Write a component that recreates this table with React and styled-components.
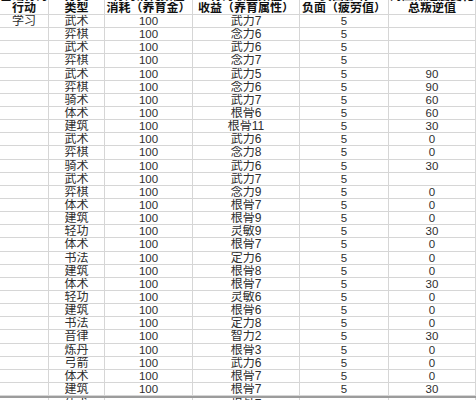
import React from 'react';
import styled, { createGlobalStyle } from 'styled-components';

const GlobalStyle = createGlobalStyle`
  html, body {
    margin: 0;
    padding: 0;
    background: #ffffff;
  }
  body {
    font-family: "Liberation Sans", "Noto Sans CJK SC", sans-serif;
    color: #2a2a2a;
  }
`;

const COLS = '49px 56px 88px 107px 89px 87px';

const Sheet = styled.div`
  width: 476px;
  height: 400px;
  overflow: hidden;
  background: #fff;
`;

const Row = styled.div`
  display: grid;
  grid-template-columns: ${COLS};
  height: ${({ $h }) => $h || '13.15px'};
  overflow: hidden;
  box-sizing: border-box;
  ${({ $cut }) => $cut && 'border-top: 2px solid #9c9c9c;'}
`;

const Cell = styled.div`
  box-sizing: border-box;
  border-right: 1px solid #d6d6d6;
  border-bottom: 1px solid #d6d6d6;
  display: flex;
  align-items: ${({ $valign }) => $valign || 'center'};
  justify-content: center;
  font-size: 12px;
  line-height: 12px;
  white-space: nowrap;
  overflow: hidden;
  font-weight: ${({ $bold }) => ($bold ? 700 : 400)};
  color: ${({ $bold }) => ($bold ? '#111' : '#2e2e2e')};
`;

const TopCell = styled(Cell)`
  border-bottom: none;
  position: relative;
  & > span {
    position: absolute;
    left: 0;
    right: 0;
    bottom: 0;
    text-align: center;
    transform: translateY(0);
  }
`;

const Num = styled.span`
  font-size: 11.5px;
`;

const head = ['行动', '类型', '消耗（养育金）', '收益（养育属性）', '负面（疲劳值）', '总叛逆值'];
const topRow = ['基础行为', '分类', '行为消耗数值', '行为收益数值', '负面影响', '对应叛逆度变化'];

const rows = [
  ['学习', '武术', '武力7', ''],
  ['', '弈棋', '念力6', ''],
  ['', '武术', '武力6', ''],
  ['', '弈棋', '念力7', ''],
  ['', '武术', '武力5', '90'],
  ['', '弈棋', '念力6', '90'],
  ['', '骑术', '武力7', '60'],
  ['', '体术', '根骨6', '60'],
  ['', '建筑', '根骨11', '30'],
  ['', '武术', '武力6', '0'],
  ['', '弈棋', '念力8', '0'],
  ['', '骑术', '武力6', '30'],
  ['', '武术', '武力7', ''],
  ['', '弈棋', '念力9', '0'],
  ['', '体术', '根骨7', '0'],
  ['', '建筑', '根骨9', '0'],
  ['', '轻功', '灵敏9', '30'],
  ['', '体术', '根骨7', '0'],
  ['', '书法', '定力6', '0'],
  ['', '建筑', '根骨8', '0'],
  ['', '体术', '根骨7', '30'],
  ['', '轻功', '灵敏6', '0'],
  ['', '建筑', '根骨6', '0'],
  ['', '书法', '定力8', '0'],
  ['', '音律', '智力2', '30'],
  ['', '炼丹', '根骨3', '0'],
  ['', '弓箭', '武力6', '0'],
  ['', '体术', '根骨7', '0'],
  ['', '建筑', '根骨7', '30'],
];

const DataRow = ({ r }) => (
  <Row>
    <Cell>{r[0]}</Cell>
    <Cell>{r[1]}</Cell>
    <Cell><Num>100</Num></Cell>
    <Cell>{r[2]}</Cell>
    <Cell><Num>5</Num></Cell>
    <Cell><Num>{r[3]}</Num></Cell>
  </Row>
);

export default function App() {
  return (
    <>
      <GlobalStyle />
      <Sheet>
        <Row $h="2px">
          {topRow.map((t, i) => (
            <TopCell key={i} $bold>
              <span>{t}</span>
            </TopCell>
          ))}
        </Row>
        <Row $h="13px">
          {head.map((t, i) => (
            <Cell key={i} $bold>
              {t}
            </Cell>
          ))}
        </Row>
        {rows.map((r, i) => (
          <DataRow key={i} r={r} />
        ))}
        <Row $cut $h="8px">
          <Cell $valign="flex-start"></Cell>
          <Cell $valign="flex-start">体术</Cell>
          <Cell $valign="flex-start"><Num>100</Num></Cell>
          <Cell $valign="flex-start">根骨7</Cell>
          <Cell $valign="flex-start"><Num>5</Num></Cell>
          <Cell $valign="flex-start"></Cell>
        </Row>
      </Sheet>
    </>
  );
}
